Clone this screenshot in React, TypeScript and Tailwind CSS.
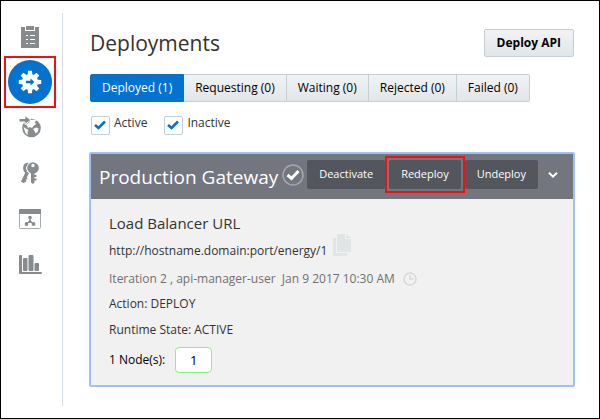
import React, { useState } from 'react'

const TABS = [
  { id: 'deployed', label: 'Deployed (1)' },
  { id: 'requesting', label: 'Requesting (0)' },
  { id: 'waiting', label: 'Waiting (0)' },
  { id: 'rejected', label: 'Rejected (0)' },
  { id: 'failed', label: 'Failed (0)' },
]

const ClipboardIcon = () => (
  <svg viewBox="0 0 22 24" className="h-6 w-[22px]">
    <path fill="#878b8e" d="M2 2h5V1h8v1h5v21H2z" />
    <path fill="#fff" d="M6 2h1v3h8V2h1v4H6z" />
    <path stroke="#fff" strokeWidth="1" d="M7 10.500h2M11 10.500h5M7 14.500h2M11 14.500h5M7 18.500h2M11 18.500h5" />
  </svg>
)

const GearIcon = () => (
  <svg viewBox="-12 -12 24 24" className="h-6 w-6">
    <g fill="#fff">
      <circle r="8" />
      {[0, 45, 90, 135, 180, 225, 270, 315].map((angle) => (
        <path key={angle} d="M-2.4 -6L-2 -11.200H2L2.4 -6z" transform={`rotate(${angle})`} />
      ))}
    </g>
    <path fill="#0572ce" d="M-4 -1.200H.5V-3.600L4.400 0L.5 3.600V1.200H-4z" />
  </svg>
)

const GlobeIcon = () => (
  <svg viewBox="0 0 24 24" className="h-6 w-6">
    <circle cx="13.500" cy="13" r="9.300" fill="#878b8e" />
    <path fill="#fff" d="M8 9l3-1 2-3 4-.5 1.500 1.500-2 1 1.500 2-2.500 2-1.500 2-2-1-2 1zM15 14l3-1.500 2.500 1-.5 3-2.500 2-1-2.500zM5.500 12l3 2 2 1-1 2 .5 3-2.500-2z" />
    <path fill="#878b8e" stroke="#fff" strokeWidth="1" d="M1 3.500h6V.5l6 4.500-6 4.500V7H1z" />
  </svg>
)

const KeysIcon = () => (
  <svg viewBox="0 0 22 24" className="h-6 w-[22px]">
    <g fill="none" stroke="#878b8e">
      <path strokeWidth="3.500" d="M8.500 11L3.500 21.500" />
      <path strokeWidth="2" d="M5 16l3 2M4 18.500l3 2" />
      <path strokeWidth="3" d="M10 3.500C5 2.500 4.500 8.500 7.500 11" />
    </g>
    <circle cx="14" cy="7" r="6.600" fill="#fff" />
    <circle cx="14" cy="7" r="5.800" fill="#878b8e" />
    <circle cx="14" cy="4.500" r="1.700" fill="#fff" />
    <path fill="#878b8e" d="M12 12h3.500v2h2v2h-2v1.500h2v2h-2v2l-1.500 1.500-2-1.500z" />
  </svg>
)

const AppWindowIcon = () => (
  <svg viewBox="0 0 24 22" className="h-[22px] w-6">
    <rect x="1.500" y="1.500" width="21" height="19" rx="1" fill="#fff" stroke="#a3aab0" />
    <path fill="#878b8e" d="M1 2q0-1 1-1h20q1 0 1 1v4H1z" />
    <path fill="none" stroke="#878b8e" strokeWidth="1.200" d="M12 9v4.500L8 16M12 13.500L16 16" />
    <g fill="#878b8e">
      <circle cx="12" cy="9.500" r="1.800" />
      <circle cx="12" cy="13.500" r="1.500" />
      <circle cx="8.500" cy="16" r="1.900" />
      <circle cx="15.500" cy="16" r="1.900" />
    </g>
  </svg>
)

const ChartIcon = () => (
  <svg viewBox="0 0 24 22" className="h-[22px] w-6">
    <g fill="#878b8e">
      <path d="M1 2q0-1 1-1h1q1 0 1 1v16h19q1 0 1 1t-1 1H2q-1 0-1-1z" />
      <rect x="5" y="4" width="4.500" height="13" rx="1" />
      <rect x="10.500" y="1" width="5" height="16" rx="1" />
      <rect x="16.500" y="9" width="4.500" height="8" rx="1" />
    </g>
  </svg>
)

const NAV = [
  { label: 'APIs', icon: <ClipboardIcon /> },
  { label: 'Deployments', icon: <GearIcon />, active: true },
  { label: 'Registrations', icon: <GlobeIcon /> },
  { label: 'Grants', icon: <KeysIcon /> },
  { label: 'Portal', icon: <AppWindowIcon /> },
  { label: 'Analytics', icon: <ChartIcon /> },
]

// Red callout frame drawn around its relative parent
const Callout = () => (
  <span className="pointer-events-none absolute -inset-1 border-2 border-[#ee1111]" />
)

const FilterBox: React.FC<{ label: string }> = ({ label }) => {
  const [checked, setChecked] = useState(true)

  return (
    <label className="flex items-start gap-1">
      <span className="grid h-5 w-5 place-items-center">
        <input
          type="checkbox"
          checked={checked}
          onChange={() => setChecked(!checked)}
          className="col-start-1 row-start-1 h-[19px] w-[19px] appearance-none rounded-xs border border-[#c4ced7] bg-white"
        />
        {checked && (
          <svg viewBox="0 0 12 10" className="pointer-events-none col-start-1 row-start-1 h-[10px] w-3">
            <path fill="none" stroke="#0572ce" strokeWidth="2.600" d="M1 5l3.500 3L11 1.500" />
          </svg>
        )}
      </span>
      <span className="leading-4">{label}</span>
    </label>
  )
}

const headerButton = 'block h-[29px] rounded-xs bg-[#53565d] px-3 text-[11px] font-medium text-white'

const App: React.FC = () => {
  const [activeTab, setActiveTab] = useState('deployed')

  return (
    <div className="flex min-h-screen border border-black bg-white py-3 font-['Open_Sans','Noto_Sans',sans-serif] text-xs text-[#333]">
      {/* Sidebar */}
      <nav className="flex w-[62px] shrink-0 flex-col items-center border-r border-[#d6dfe6] pt-px pr-1">
        {NAV.map(({ label, icon, active }) => (
          <a
            key={label}
            href="#"
            aria-label={label}
            className={
              active
                ? 'relative flex h-11 w-11 items-center justify-center rounded-full bg-[#0572ce]'
                : 'flex h-[46px] w-[46px] items-center justify-center'
            }
          >
            {icon}
            {active && <Callout />}
          </a>
        ))}
      </nav>

      <main className="min-w-0 grow pt-[14px] pr-[25px] pl-[26px]">
        {/* Title */}
        <div className="flex items-center justify-between">
          <h1 className="pl-[1px] text-[21px] leading-8">Deployments</h1>
          <button className="h-7 rounded-xs border border-[#c4ced7] bg-linear-to-b from-[#f1f3f4] to-[#e2e6e9] px-3 font-bold text-black">
            Deploy API
          </button>
        </div>

        {/* Status tabs */}
        <div className="mt-[15px] flex pl-[1px] text-black">
          {TABS.map((tab) => (
            <button
              key={tab.id}
              onClick={() => setActiveTab(tab.id)}
              className={
                activeTab === tab.id
                  ? 'h-7 border border-[#0572ce] bg-[#0572ce] px-[11px] font-medium text-white first:rounded-l-xs'
                  : 'h-7 border border-l-0 border-[#c4ced7] bg-linear-to-b from-[#f1f3f4] to-[#e2e6e9] px-[11px] last:rounded-r-xs'
              }
            >
              {tab.label}
            </button>
          ))}
        </div>

        <div className="mt-[13px] flex gap-4 pl-[1px]">
          <FilterBox label="Active" />
          <FilterBox label="Inactive" />
        </div>

        {/* Gateway card */}
        <section className="mt-[17px] -mr-px rounded-xs border-2 border-[#a0c1f8] bg-[#f1f1f1]">
          <header className="flex h-[45px] items-start bg-[#73757f] pt-[6px] pl-2 text-white">
            <h2 className="text-[19px] leading-[34px] whitespace-nowrap">Production Gateway</h2>
            <div className="ml-1 flex items-center">
              <svg viewBox="0 0 22 22" className="h-[22px] w-[22px] shrink-0" fill="none">
                <circle cx="11" cy="11" r="10" stroke="#a5a7b0" strokeWidth="1.500" />
                <path stroke="#fff" strokeWidth="3" d="M5.500 11l4 3.500L16.500 7" />
              </svg>
              <div className="ml-[3px] flex gap-1">
                <button className={headerButton}>Deactivate</button>
                <div className="relative">
                  <button className={headerButton}>Redeploy</button>
                  <Callout />
                </div>
                <button className={headerButton}>Undeploy</button>
              </div>
              <button aria-label="More" className="ml-[10px]">
                <svg viewBox="0 0 10 6" className="h-[6px] w-[10px]">
                  <path fill="none" stroke="#fff" strokeWidth="2" d="M1 .8L5 4.600L9 .8" />
                </svg>
              </button>
            </div>
          </header>

          <div className="px-[18px] pt-3 pb-3">
            <h3 className="text-[15px] leading-6">Load Balancer URL</h3>
            <div className="flex h-8 items-center gap-[5px]">
              <span>http://hostname.domain:port/energy/1</span>
              <svg viewBox="0 0 20 22" className="mb-3 h-[22px] w-5">
                <path fill="#e2e5e5" d="M5 0h8v5h6v13H5zM14 0l5 4h-5zM1 4h3v15h11v3H1z" />
              </svg>
            </div>
            <div className="flex h-6 items-center gap-2 text-[#707070]">
              <span>Iteration 2 , api-manager-user&nbsp; Jan 9 2017 10:30 AM</span>
              <svg viewBox="0 0 14 14" className="h-[14px] w-[14px]" fill="none" stroke="#d8d8d8" strokeWidth="1.500">
                <circle cx="7" cy="7" r="6" />
                <path d="M7 3v4h3.500" />
              </svg>
            </div>
            <p className="leading-[26px]">Action: DEPLOY</p>
            <p className="leading-[26px]">Runtime State: ACTIVE</p>
            <div className="mt-1 flex items-center gap-[10px] text-black">
              <label htmlFor="nodes">1 Node(s):</label>
              <input
                id="nodes"
                defaultValue="1"
                className="h-[26px] w-[37px] rounded-sm border border-[#8eee8e] bg-white text-center text-[13px]"
              />
            </div>
          </div>
        </section>
      </main>
    </div>
  )
}

export default App
